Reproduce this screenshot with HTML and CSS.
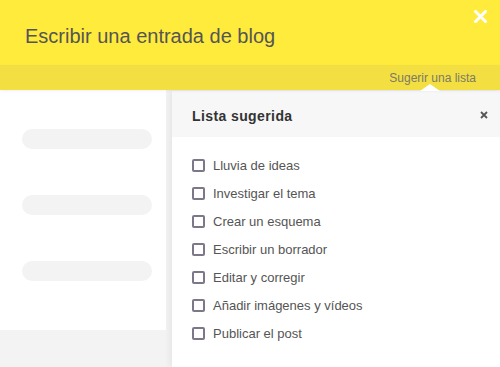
FILE: index.html
```html
<!DOCTYPE html>
<html lang="es">
<head>
<meta charset="utf-8">
<title>Escribir una entrada de blog</title>
<link rel="stylesheet" href="styles.css">
</head>
<body>
<div class="page">
  <header class="header">
    <h1 class="title">Escribir una entrada de blog</h1>
    <button class="close" aria-label="Cerrar">
      <svg width="13" height="13" viewBox="0 0 13 13"><path d="M1.5 1.5 L11.5 11.5 M11.5 1.5 L1.5 11.5" stroke="#fff" stroke-width="3" stroke-linecap="square"/></svg>
    </button>
  </header>
  <div class="subbar">
    <span class="suggest">Sugerir una lista</span>
    <span class="arrow"></span>
  </div>
  <div class="main">
    <div class="leftcol">
      <div class="card">
        <div class="skel"></div>
        <div class="skel"></div>
        <div class="skel"></div>
      </div>
    </div>
    <section class="panel">
      <div class="panel-head">
        <span class="panel-title">Lista sugerida</span>
        <svg class="panel-x" width="8" height="8" viewBox="0 0 8 8"><path d="M1 1 L7 7 M7 1 L1 7" stroke="#555" stroke-width="1.8"/></svg>
      </div>
      <ul class="list">
        <li><span class="box"></span>Lluvia de ideas</li>
        <li><span class="box"></span>Investigar el tema</li>
        <li><span class="box"></span>Crear un esquema</li>
        <li><span class="box"></span>Escribir un borrador</li>
        <li><span class="box"></span>Editar y corregir</li>
        <li><span class="box"></span>Añadir imágenes y vídeos</li>
        <li><span class="box"></span>Publicar el post</li>
      </ul>
    </section>
  </div>
</div>
</body>
</html>
```
FILE: styles.css
```css
* { box-sizing: border-box; }
html, body { margin: 0; padding: 0; }
body {
  width: 500px;
  height: 367px;
  overflow: hidden;
  font-family: Arial, "Liberation Sans", sans-serif;
  background: #f3f3f3;
}
.page { display: flex; flex-direction: column; height: 367px; }
.header {
  position: relative;
  background: #ffeb3b;
  height: 65px;
  display: flex;
  align-items: flex-start;
  padding: 24px 0 0 25px;
}
.title {
  margin: 0;
  font-size: 20px;
  font-weight: normal;
  color: #555;
  line-height: 24px;
}
.close {
  position: absolute;
  top: 10px;
  right: 13px;
  border: 0;
  padding: 0;
  background: none;
  width: 13px;
  height: 13px;
  display: block;
}
.close svg { display: block; }
.subbar {
  position: relative;
  z-index: 2;
  background: #f3df42;
  height: 25px;
  display: flex;
  justify-content: flex-end;
  align-items: center;
  padding-right: 24px;
  box-shadow: 0 1px 3px rgba(0,0,0,0.06);
}
.suggest {
  font-size: 12px;
  color: #7d7a66;
  padding-top: 1px;
}
.arrow {
  position: absolute;
  left: 420px;
  bottom: -1px;
  width: 0;
  height: 0;
  border-left: 10px solid transparent;
  border-right: 10px solid transparent;
  border-bottom: 7px solid #fff;
}
.main {
  flex: 1;
  display: flex;
  align-items: stretch;
  min-height: 0;
}
.leftcol {
  width: 172px;
  background: #f3f3f3;
}
.card {
  width: 166px;
  height: 240px;
  background: #fff;
  padding-top: 39px;
  padding-left: 22px;
  display: flex;
  flex-direction: column;
  gap: 46px;
}
.skel {
  width: 130px;
  height: 20px;
  border-radius: 10px;
  background: #f3f3f3;
}
.panel {
  position: relative;
  z-index: 1;
  flex: 1;
  background: #fff;
  box-shadow: -3px 0 6px rgba(0,0,0,0.05);
  margin-top: 1px;
}
.panel-head {
  height: 46px;
  background: #f7f7f7;
  display: flex;
  align-items: center;
  justify-content: space-between;
  padding: 0 12px 0 20px;
}
.panel-title {
  font-size: 14px;
  font-weight: bold;
  letter-spacing: 0.4px;
  color: #333;
  padding-top: 4px;
}
.panel-x { display: block; margin-top: 2px; }
.list {
  list-style: none;
  margin: 0;
  padding: 14px 0 0 20px;
  display: flex;
  flex-direction: column;
}
.list li {
  height: 28px;
  display: flex;
  align-items: center;
  font-size: 13px;
  color: #555;
}
.box {
  width: 13px;
  height: 13px;
  border: 2px solid #7d7789;
  border-radius: 2px;
  margin-right: 8px;
  flex: none;
}
```
